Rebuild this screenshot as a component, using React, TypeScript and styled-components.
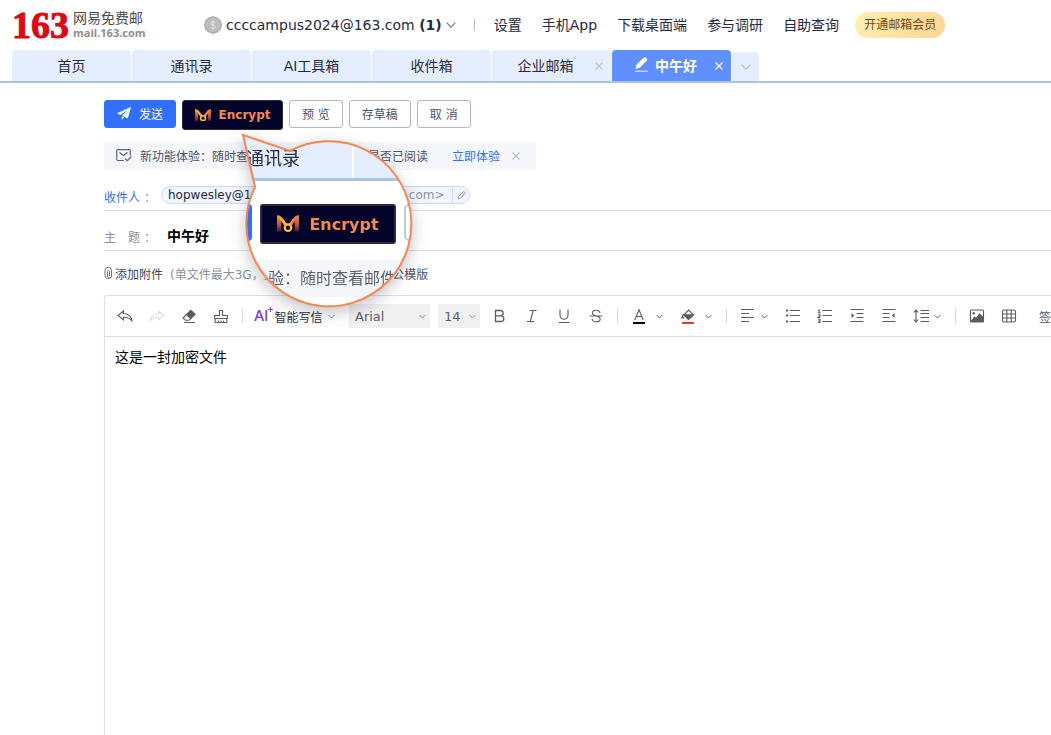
import React from 'react';
import styled, { createGlobalStyle, css } from 'styled-components';

const Global = createGlobalStyle`
  *, *::before, *::after { box-sizing: border-box; }
  html { background: #fff; }
  body { margin: 0; overflow: hidden; background: #fff; }
  body, button, input, select, textarea {
    font-family: "DejaVu Sans", "Noto Sans CJK SC", sans-serif;
  }
  button { border: 0; padding: 0; background: none; color: inherit; cursor: pointer; }
  a { color: inherit; text-decoration: none; }
  svg { display: block; flex: none; }
`;

const Page = styled.div`
  position: relative;
  display: flex;
  flex-direction: column;
  height: 100vh;
  overflow: hidden;
  border-radius: 16px;
  background: #fff;
  color: #262a41;
  white-space: nowrap;
`;

const TopBar = styled.header`
  display: flex;
  align-items: center;
  height: 50px;
  padding-left: 12px;
  font-size: 14px;
`;

const Logo = styled.a`
  display: flex;
  align-items: center;
  gap: 4px;
  width: 192px;
`;

const LogoNumber = styled.span`
  color: #db0a17;
  font: bold 38px/48px "Liberation Serif", serif;
  -webkit-text-stroke: 1px #db0a17;
`;

const LogoText = styled.span`
  display: flex;
  flex-direction: column;
  color: #4c4c4c;
  font-size: 14px;
  line-height: 16px;
`;

const LogoDomain = styled.span`
  color: #8e8e8e;
  font: 700 11px/14px "Open Sans", sans-serif;
`;

const Account = styled.button`
  display: flex;
  align-items: center;
  gap: 4px;
  height: 28px;
  font-size: 14px;
`;

const AccountChevron = styled.span`
  color: #7d808c;
`;

const TopNav = styled.nav`
  display: flex;
  align-items: center;
  gap: 20px;
  padding-bottom: 2px;
`;

const Pipe = styled.span`
  width: 1px;
  height: 12px;
  margin: 0 19px 0 18px;
  background: #b8bac4;
`;

const VipLink = styled.a`
  margin-left: 16px;
  padding: 0 9px;
  border-radius: 13px;
  background: linear-gradient(100deg, #ffeeb4, #ffd591);
  color: #7b4514;
  font-size: 12px;
  line-height: 26px;
`;

const Tabs = styled.nav`
  display: flex;
  align-items: flex-end;
  gap: 1px;
  height: 33px;
  padding-left: 12px;
  border-bottom: 2px solid #abc2ed;
`;

const Tab = styled.div<{ $active?: boolean; $closable?: boolean }>`
  display: grid;
  grid-template-columns: ${p => (p.$closable ? 12 : 24)}px 1fr 24px;
  align-items: center;
  width: 119px;
  height: 31px;
  border-radius: 4px 4px 0 0;
  background: ${p => (p.$active ? '#6090ff' : '#e5eeff')};
  color: ${p => (p.$active ? '#fff' : '#262a41')};
  font-size: 14px;
  font-weight: ${p => (p.$active ? 700 : 400)};
`;

const TabLabel = styled.a`
  display: flex;
  grid-column: 2;
  align-items: center;
  justify-content: center;
  gap: 6px;
  padding-bottom: 2px;
`;

const TabClose = styled.button<{ $light?: boolean }>`
  display: grid;
  place-items: center;
  height: 24px;
  color: ${p => (p.$light ? '#fff' : '#bcc4d6')};
`;

const MoreTabs = styled.button`
  display: grid;
  place-items: center;
  width: 27px;
  height: 29px;
  border-radius: 4px 4px 0 0;
  background: #e5eeff;
  color: #b5c1d6;
`;

const Compose = styled.main`
  display: flex;
  flex: 1;
  flex-direction: column;
  min-height: 0;
  padding: 17px 0 0 104px;
`;

const Actions = styled.div`
  display: flex;
  align-items: flex-start;
  gap: 6px;
  height: 42px;
`;

const ActionButton = styled.button<{ $primary?: boolean }>`
  display: flex;
  align-items: center;
  gap: 8px;
  height: 28px;
  padding: 0 12px 2px;
  border: 1px solid #b3b6c5;
  border-radius: 3px;
  background: #fff;
  color: #4e5469;
  font-size: 12px;
  ${p => p.$primary && css`
    border-color: #336fff;
    background: #336fff;
    color: #fff;
  `}
`;

const EncryptButton = styled.button<{ $large?: boolean }>`
  display: flex;
  flex: none;
  align-items: center;
  justify-content: center;
  gap: ${p => (p.$large ? 10 : 8)}px;
  width: ${p => (p.$large ? 136 : 101)}px;
  height: ${p => (p.$large ? 40 : 30)}px;
  border: ${p => (p.$large ? 2 : 1)}px solid #2b2b40;
  border-radius: 3px;
  background: #04042a;
  color: #f6874f;
  font-size: ${p => (p.$large ? 16 : 12)}px;
  font-weight: 700;
`;

const Notice = styled.aside`
  display: flex;
  align-items: center;
  width: 432px;
  height: 28px;
  margin-bottom: 1px;
  padding: 0 0 1px 12px;
  border-radius: 3px;
  background: #f5f6fa;
  color: #4e5469;
  font-size: 12px;
`;

const NoticeText = styled.span`
  margin: 0 24px 0 8px;
`;

const NoticeLink = styled.a`
  margin-right: 12px;
  color: #336fff;
`;

const CloseButton = styled.button`
  color: #b5bdcc;
`;

const Field = styled.div`
  display: flex;
  align-items: center;
  height: 40px;
  padding-top: 9px;
  border-bottom: 1px solid #dde0e8;
  font-size: 12px;
`;

const FieldLabel = styled.label<{ $link?: boolean }>`
  width: 57px;
  padding-top: 2px;
  color: ${p => (p.$link ? '#336fff' : '#8a8fa0')};
`;

const Colon = styled.span`
  padding-left: 4px;
  color: #8a8fa0;
`;

const Chip = styled.span`
  display: flex;
  align-items: center;
  height: 18px;
  padding-left: 6px;
  border: 1px solid #cddafa;
  border-radius: 9px;
  background: #f1f5ff;
  color: #262a41;
`;

const ChipAddress = styled.span`
  color: #8f93a0;
`;

const ChipEdit = styled.button`
  display: grid;
  place-items: center;
  width: 17px;
  height: 16px;
  margin-left: 8px;
  border-left: 1px solid #cddafa;
  color: #8a8fa0;
`;

const SubjectInput = styled.input`
  flex: 1;
  padding: 0 6px;
  border: 0;
  outline: 0;
  background: none;
  color: #000;
  font-size: 14px;
  font-weight: 700;
`;

const Attachments = styled.div`
  display: flex;
  align-items: center;
  height: 44px;
  color: #4e5469;
  font-size: 12px;
`;

const AttachButton = styled.button`
  display: flex;
  align-items: center;
  gap: 2px;
  color: #3f4357;
  font-size: 12px;
`;

const AttachHint = styled.span`
  margin: 0 40px 0 7px;
  color: #8a8fa0;
`;

const Editor = styled.section`
  display: flex;
  flex: 1;
  flex-direction: column;
  min-height: 0;
  border: 1px solid #dcdfe8;
  border-width: 1px 0 0 1px;
  border-radius: 3px 0 0 0;
`;

const Toolbar = styled.div`
  display: flex;
  align-items: center;
  height: 41px;
  padding-left: 4px;
  overflow: hidden;
  border-bottom: 1px solid #dcdde1;
  color: #5c5c5c;
`;

const Tool = styled.button<{ $faded?: boolean; $menu?: 'wide' | 'tight' }>`
  display: flex;
  flex: none;
  align-items: center;
  gap: ${p => (p.$menu === 'tight' ? 5 : 9)}px;
  width: ${p => (p.$menu ? (p.$menu === 'wide' ? 49 : 45) : 32)}px;
  height: 32px;
  padding-left: 8px;
  opacity: ${p => (p.$faded ? 0.2 : 1)};
`;

const Divider = styled.span`
  flex: none;
  width: 1px;
  height: 14px;
  margin: 0 5px;
  background: #d9dae0;
`;

const AiButton = styled.button`
  display: flex;
  flex: none;
  align-items: center;
  width: 101px;
  height: 32px;
  padding-left: 6px;
  color: #262a41;
  font-size: 12px;
`;

const AiMark = styled.span`
  display: flex;
  margin-right: 1px;
  background: linear-gradient(90deg, #7a3ff2, #8c50ef);
  background-clip: text;
  color: #8146f0;
  font: 15px/18px Inter, sans-serif;
`;

const AiChevron = styled.span`
  margin-left: 6px;
  color: #85878f;
`;

const SelectBox = styled.label<{ $width: number; $gap: number }>`
  display: grid;
  flex: none;
  align-items: center;
  width: ${p => p.$width}px;
  height: 24px;
  margin-right: ${p => p.$gap}px;
  background: #f0f0f0;
  svg { grid-area: 1 / 1; justify-self: end; margin-right: 4px; color: #85878f; pointer-events: none; }
`;

const Select = styled.select`
  grid-area: 1 / 1;
  width: 100%;
  height: 24px;
  padding: 0 6px;
  border: 0;
  appearance: none;
  background: none;
  color: #5b6070;
  font-size: 13px;
`;

const SignButton = styled.button`
  flex: none;
  margin-left: 14px;
  color: #4e5469;
  font-size: 12px;
`;

const MailBody = styled.textarea`
  flex: 1;
  padding: 9px 10px;
  border: 0;
  outline: 0;
  resize: none;
  background: none;
  color: #000;
  font-size: 14px;
  line-height: 22px;
`;

/* Magnifier bubble floating over the compose form */
const LENS = 'M2 2 L49 18 A82.5 82.5 0 1 1 14 54 Z';

const Lens = styled.div`
  position: absolute;
  top: 133px;
  left: 241px;
  filter: drop-shadow(0 5px 8px rgba(40, 40, 60, 0.28));
`;

const LensView = styled.div`
  width: 174px;
  height: 176px;
  overflow: hidden;
  background: #fff;
  clip-path: path('${LENS}');
`;

const LensOutline = styled.svg`
  position: absolute;
  inset: 0;
  overflow: visible;
`;

const LensTabs = styled.div`
  display: grid;
  grid-template-columns: 111px 1fr;
  gap: 2px;
  height: 48px;
  border-bottom: 3px solid #abc2ed;
`;

const LensTab = styled.div`
  padding: 15px 0 0 5px;
  background: #e5eeff;
  color: #262a41;
  font-size: 18px;
  line-height: 22px;
`;

const LensActions = styled.div`
  display: flex;
  align-items: flex-start;
  gap: 8px;
  height: 79px;
  padding-top: 23px;
`;

const LensSend = styled.span`
  flex: none;
  width: 11px;
  height: 37px;
  border-radius: 0 4px 4px 0;
  background: #336fff;
`;

const LensPreview = styled.span`
  flex: none;
  width: 40px;
  height: 37px;
  border: 2px solid #c6c9d4;
  border-radius: 5px;
`;

const LensNotice = styled.div`
  height: 37px;
  padding: 1px 0 0 27px;
  background: #f5f6fa;
  color: #5b6073;
  font-size: 16px;
  line-height: 36px;
`;

const Chevron = ({ size = 7 }: { size?: number }) => (
  <svg width={size} height={size} viewBox="0 0 8 8" fill="none" stroke="currentColor" strokeWidth="1">
    <path d="M.6 2.2 4 5.7 7.4 2.2" />
  </svg>
);

const Cross = () => (
  <svg width="8" height="8" viewBox="0 0 8 8" fill="none" stroke="currentColor" strokeWidth="1.2">
    <path d="m.5.5 7 7m0-7-7 7" />
  </svg>
);

const Coin = () => (
  <svg width="18" height="18" viewBox="0 0 18 18">
    <path d="M9 0 13.5 1.4 16.800 4.500 18 9 16.800 13.500 13.500 16.600 9 18 4.500 16.600 1.200 13.500 0 9 1.200 4.500 4.500 1.400Z" fill="#b0b0b0" />
    <circle cx="9" cy="9" r="6.2" fill="#bababa" stroke="#d2d2d2" strokeWidth=".8" />
    <path d="M11.300 7C11.200 5.900 10.300 5.400 9 5.400S6.700 6 6.700 7.100C6.700 8.300 7.800 8.600 9 8.900S11.400 9.600 11.400 10.900 10.300 12.600 9 12.600 6.600 12 6.500 10.900M9 4.200V13.800" fill="none" stroke="#e8e8e8" strokeWidth="1" />
  </svg>
);

const Plane = () => (
  <svg width="14" height="13" viewBox="0 0 14 13" fill="currentColor">
    <path d="M14 0 0 6.200 3.500 8 11 2.600 5.200 8.700 10.800 11.400ZM4.800 9.500v3.300L7 10.600Z" />
  </svg>
);

const EncryptMark = ({ width, id }: { width: number; id: string }) => (
  <svg width={width} height={width * 0.8} viewBox="0 0 20 16" fill="none">
    <defs>
      <linearGradient id={id} x1="0" y1="0" x2="20" y2="0" gradientUnits="userSpaceOnUse">
        <stop offset="0" stopColor="#f7952f" />
        <stop offset=".4" stopColor="#ffb92b" />
        <stop offset=".65" stopColor="#e98a45" />
        <stop offset="1" stopColor="#e9704d" />
      </linearGradient>
      <linearGradient id={`${id}-leg`} x1="0" y1="0" x2="0" y2="16" gradientUnits="userSpaceOnUse">
        <stop offset="0" stopColor="#f78b38" />
        <stop offset=".5" stopColor="#c25a48" />
        <stop offset="1" stopColor="#2c1038" />
      </linearGradient>
    </defs>
    <path d="M0 0 4 2.500V15H0ZM20 0 16 2.500V15h4Z" fill={`url(#${id}-leg)`} />
    <path d="M.8 1.500C4.800 2.200 5.800 7 8.300 9M19.200 1.500C15.200 2.200 14.200 7 11.700 9" stroke={`url(#${id})`} strokeWidth="2.800" />
    <circle cx="10" cy="11.500" r="3" stroke="#ffbf2c" strokeWidth="2" />
  </svg>
);

const MailCheck = () => (
  <svg width="16" height="13" viewBox="0 0 16 13" fill="none" stroke="#5f6577" strokeWidth="1.200">
    <path d="M8 11.500H2.200C1.200 11.500.7 11 .7 10.300V1.900C.7 1.100 1.200.7 2 .7h11c.8 0 1.300.4 1.300 1.200V6.500M3.500 3.500 7.500 6.500 11.500 3.500M9 9.500l2.200 2.200 4.200-4.200" />
  </svg>
);

const Pencil = () => (
  <svg width="9" height="9" viewBox="0 0 9 9" fill="none" stroke="currentColor" strokeWidth=".8">
    <path d="M1 8 1.500 5.500 6 1c.6-.6 1.200-.5 1.700 0s.6 1.100 0 1.700L3.300 7.300ZM5.300 1.800l1.800 1.800" />
  </svg>
);

const ComposeIcon = () => (
  <svg width="15" height="15" viewBox="0 0 15 15" fill="#fff">
    <path d="M1.500 12 2.700 7.600 9.300 1c1-1 2.300-.9 3.100-.1.800.8.900 2 0 3L5.800 10.800Z" />
    <path d="M1 13.500h13V15H1Z" opacity=".6" />
  </svg>
);

const Clip = () => (
  <svg width="9" height="12" viewBox="0 0 9 12" fill="none" stroke="#6e7280" strokeWidth="1">
    <path d="M1 8.500V3.500a3 3 0 0 1 6.500 0v5.500a2 2 0 0 1-4 0V4.500a1 1 0 0 1 2 0V9M1 8.500a3.200 3.200 0 0 0 6 1.500" />
  </svg>
);

const Icon = ({ children, sw = 1.1 }: { children: React.ReactNode; sw?: number }) => (
  <svg width="16" height="16" viewBox="0 0 16 16" fill="none" stroke="currentColor" strokeWidth={sw}>{children}</svg>
);

const tabs = ['首页', '通讯录', 'AI工具箱', '收件箱'];
const topLinks = ['设置', '手机App', '下载桌面端', '参与调研', '自助查询'];

export default function App() {
  return (
    <>
      <Global />
      <Page>
        <TopBar>
          <Logo href="#">
            <LogoNumber>163</LogoNumber>
            <LogoText>网易免费邮<LogoDomain>mail.163.com</LogoDomain></LogoText>
          </Logo>
          <Account>
            <Coin />
            <span>ccccampus2024@163.com <b>(1)</b></span>
            <AccountChevron><Chevron size={10} /></AccountChevron>
          </Account>
          <Pipe />
          <TopNav>
            {topLinks.map(t => <a href="#" key={t}>{t}</a>)}
          </TopNav>
          <VipLink href="#">开通邮箱会员</VipLink>
        </TopBar>

        <Tabs>
          {tabs.map(t => <Tab key={t}><TabLabel href="#">{t}</TabLabel></Tab>)}
          <Tab $closable>
            <TabLabel href="#">企业邮箱</TabLabel>
            <TabClose aria-label="关闭"><Cross /></TabClose>
          </Tab>
          <Tab $active $closable>
            <TabLabel href="#"><ComposeIcon />中午好</TabLabel>
            <TabClose $light aria-label="关闭"><Cross /></TabClose>
          </Tab>
          <MoreTabs aria-label="更多"><Chevron size={10} /></MoreTabs>
        </Tabs>

        <Compose>
          <Actions>
            <ActionButton $primary><Plane />发送</ActionButton>
            <EncryptButton><EncryptMark width={16} id="mark" />Encrypt</EncryptButton>
            <ActionButton>预 览</ActionButton>
            <ActionButton>存草稿</ActionButton>
            <ActionButton>取 消</ActionButton>
          </Actions>

          <Notice>
            <MailCheck />
            <NoticeText>新功能体验：随时查看邮件状态，确认对方是否已阅读</NoticeText>
            <NoticeLink href="#">立即体验</NoticeLink>
            <CloseButton aria-label="关闭"><Cross /></CloseButton>
          </Notice>

          <Field>
            <FieldLabel as="a" href="#" $link>收件人<Colon>：</Colon></FieldLabel>
            <Chip>
              hopwesley@163.com<ChipAddress>&lt;hopwesley@163.com&gt;</ChipAddress>
              <ChipEdit aria-label="编辑"><Pencil /></ChipEdit>
            </Chip>
          </Field>
          <Field>
            <FieldLabel htmlFor="subject">主　题<Colon>：</Colon></FieldLabel>
            <SubjectInput id="subject" defaultValue="中午好" />
          </Field>

          <Attachments>
            <AttachButton><Clip />添加附件</AttachButton>
            <AttachHint>(单文件最大3G，支持在线预览)</AttachHint>
            <a href="#">办公模版</a>
          </Attachments>

          <Editor>
            <Toolbar>
              <Tool aria-label="撤销"><Icon><path d="M6.500 3 1 7.500l5.500 4.300V9.300c3.500-.2 6 .7 8.300 3.500-.5-4.300-3.500-7-8.300-7.300Z" /></Icon></Tool>
              <Tool $faded aria-label="重做"><Icon><path d="M9.500 3 15 7.500l-5.500 4.300V9.300c-3.500-.2-6 .7-8.300 3.500.5-4.300 3.500-7 8.300-7.300Z" /></Icon></Tool>
              <Tool aria-label="清除格式"><Icon><path d="M5.500 6.500 9.800 2.200l4.300 4.100-4.400 4.400Z" fill="currentColor" /><path d="M5.500 6.500 2 10l2.500 2.300h3.600l1.600-1.600M3 14.500h11" /></Icon></Tool>
              <Tool aria-label="格式刷"><Icon><path d="M6.500 7.500v-5h3v5h4.800v3H1.700v-3ZM2.200 10.500v4h11.600v-4M5.500 14.500v-2M8 14.500v-2M10.500 14.500v-2" /></Icon></Tool>
              <Divider />
              <AiButton>
                <AiMark>AI<svg width="5" height="5" viewBox="0 0 5 5" stroke="#8146f0"><path d="M2.500 0v5M0 2.500h5" /></svg></AiMark>
                智能写信
                <AiChevron><Chevron /></AiChevron>
              </AiButton>
              <SelectBox $width={81} $gap={8}><Select aria-label="字体" defaultValue="Arial"><option>Arial</option></Select><Chevron /></SelectBox>
              <SelectBox $width={42} $gap={4}><Select aria-label="字号" defaultValue="14"><option>14</option></Select><Chevron /></SelectBox>
              <Tool aria-label="加粗"><Icon sw={1.3}><path d="M3.500 2.500h5a2.600 2.600 0 0 1 0 5.300h-5ZM3.500 7.800h5.500a2.800 2.800 0 0 1 0 5.700H3.500Z" /></Icon></Tool>
              <Tool aria-label="斜体"><Icon><path d="M5.500 2.500h7M3 13.500h7M9.200 2.500 6.300 13.500" /></Icon></Tool>
              <Tool aria-label="下划线"><Icon><path d="M4 1.500v5.700a4 4 0 0 0 8 0V1.500M3 14.500h10.500" /></Icon></Tool>
              <Tool aria-label="删除线"><Icon><path d="M12 5C11.800 3.200 10.300 2.300 8.200 2.300 6 2.300 4.400 3.300 4.400 5c0 1.800 1.600 2.400 3.800 3 2.500.6 4 1.300 4 3s-1.500 2.800-4 2.800c-2.400 0-4-1-4.200-3M1.500 8h13" /></Icon></Tool>
              <Divider />
              <Tool $menu="wide" aria-label="文字颜色"><Icon><path d="M3.800 12 8 1.800 12.200 12M5.200 8.500h5.600" /><path d="M2 15h12" stroke="#000" strokeWidth="2" /></Icon><Chevron /></Tool>
              <Tool $menu="wide" aria-label="背景颜色"><Icon><path d="M8.500 2 13.300 6.800 8.500 11.200 4 6.800Z" /><path d="M3.700 6.700h9.800l-5 4.800ZM2.800 7.500 1.800 9.800l1.500.2Z" fill="currentColor" /><path d="M2 15h12" stroke="#e33d2f" strokeWidth="2" /></Icon><Chevron /></Tool>
              <Divider />
              <Tool $menu="tight" aria-label="对齐"><Icon><path d="M1 1.500h13M1 5.500h8M1 9.500h13M1 13.500h8" /></Icon><Chevron /></Tool>
              <Tool aria-label="无序列表"><Icon><path d="M5 2.500h10M5 7.500h10M5 13.500h10" /><path d="M1 2.500h2M1 7.500h2M1 13.500h2" strokeWidth="2" /></Icon></Tool>
              <Tool aria-label="有序列表"><Icon><path d="M5.500 2.500h9.500M5.500 7.500h9.500M5.500 13.500h9.500M1 2h1.200v3M.8 4.800h2.800M1 6.800h2v1.400l-2 1.300h2.400M1 11.300h2v3.200H.8M1.500 12.900H3" /></Icon></Tool>
              <Tool aria-label="增加缩进"><Icon><path d="M1.500 1.500h13M7.500 5.500h7M7.500 9.500h7M1.500 13.500h13" /><path d="M2.500 5 5.300 7.500 2.500 10Z" fill="currentColor" stroke="none" /></Icon></Tool>
              <Tool aria-label="减少缩进"><Icon><path d="M1.500 1.500h13M1.500 5.500h7M1.500 9.500h7M1.500 13.500h13" /><path d="M13.500 5 10.700 7.500l2.800 2.500Z" fill="currentColor" stroke="none" /></Icon></Tool>
              <Tool $menu="tight" aria-label="行高"><Icon><path d="M7.500 2.500H16M7.500 5.500H16M7.500 9.500H16M7.500 13.500H16M3 2.500v11M.8 4.500 3 2l2.200 2.500M.8 11.500 3 14l2.200-2.500" /></Icon><Chevron /></Tool>
              <Divider />
              <Tool aria-label="图片"><Icon><rect x="1.500" y="2" width="13" height="12" rx="1" /><path d="M2 13.500 5.500 9 7 10.500 10.500 6l3.800 4v3.500Z" fill="currentColor" /><circle cx="4.800" cy="5.300" r="1.200" fill="currentColor" stroke="none" /></Icon></Tool>
              <Tool aria-label="表格"><Icon><rect x="1.500" y="2" width="13" height="12" rx="1.500" /><path d="M1.500 6h13M1.500 10h13M5.800 2v12M10.200 2v12" /></Icon></Tool>
              <SignButton>签名</SignButton>
            </Toolbar>
            <MailBody aria-label="正文" defaultValue="这是一封加密文件" />
          </Editor>
        </Compose>

        <Lens>
          <LensView>
            <LensTabs><LensTab>通讯录</LensTab><LensTab /></LensTabs>
            <LensActions>
              <LensSend />
              <EncryptButton $large><EncryptMark width={22} id="mark-large" />Encrypt</EncryptButton>
              <LensPreview />
            </LensActions>
            <LensNotice>验：随时查看邮件</LensNotice>
          </LensView>
          <LensOutline width="174" height="176" viewBox="0 0 174 176" fill="none" stroke="#f6874f" strokeWidth="2">
            <path d={LENS} />
          </LensOutline>
        </Lens>
      </Page>
    </>
  );
}
